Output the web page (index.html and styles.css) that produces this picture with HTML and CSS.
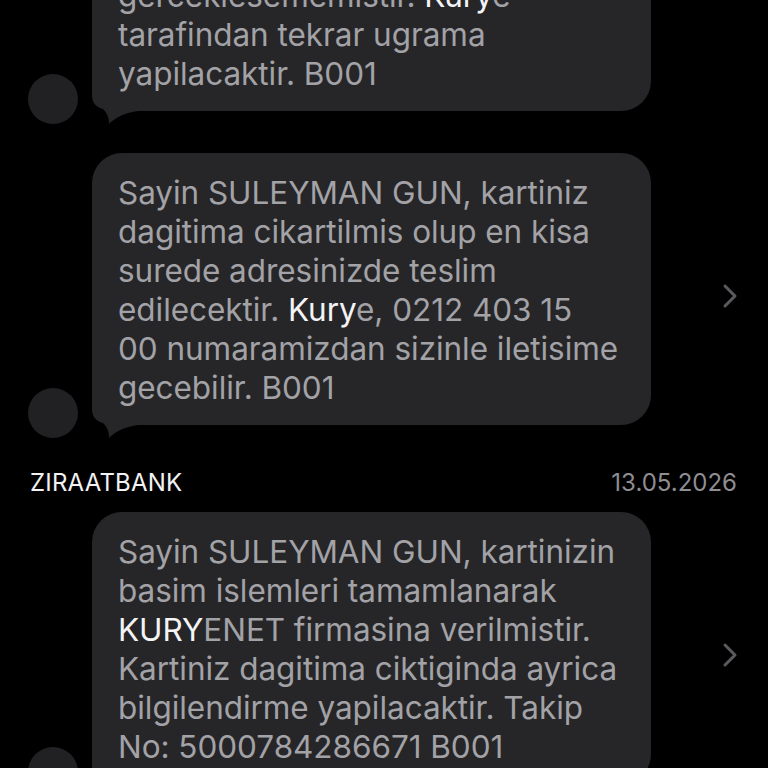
FILE: index.html
```html
<!DOCTYPE html>
<html lang="tr">
<head>
<meta charset="utf-8">
<title>Mesajlar</title>
<link rel="stylesheet" href="styles.css">
</head>
<body>
<main class="thread">
  <div class="row row-first">
    <div class="avatar"></div>
    <div class="bubble">
      <p class="text">gerceklesememistir. <span class="hl">Kury</span>e
tarafindan tekrar ugrama
yapilacaktir. B001</p>
      <svg class="tail" width="48" height="56" viewBox="0 -42 48 56"><path d="M0,-42 L0,-16 C0,-8 4,-4 11,-2 C15,2 17,6 17,13 C22,8 30,2 46,0 L46,-42 Z"/></svg>
    </div>
  </div>

  <div class="row">
    <div class="avatar"></div>
    <div class="bubble">
      <p class="text">Sayin SULEYMAN GUN, kartiniz
dagitima cikartilmis olup en kisa
surede adresinizde teslim
edilecektir. <span class="hl">Kury</span>e, 0212 403 15
00 numaramizdan sizinle iletisime
gecebilir. B001</p>
      <svg class="tail" width="48" height="56" viewBox="0 -42 48 56"><path d="M0,-42 L0,-16 C0,-8 4,-4 11,-2 C15,2 17,6 17,13 C22,8 30,2 46,0 L46,-42 Z"/></svg>
    </div>
    <svg class="chev" width="16" height="26" viewBox="0 0 16 26"><polyline points="3,3 13,13 3,23"/></svg>
  </div>

  <div class="header">
    <span class="sender">ZIRAATBANK</span>
    <span class="date">13.05.2026</span>
  </div>

  <div class="row">
    <div class="avatar"></div>
    <div class="bubble">
      <p class="text">Sayin SULEYMAN GUN, kartinizin
basim islemleri tamamlanarak
<span class="hl">KURY</span>ENET firmasina verilmistir.
Kartiniz dagitima ciktiginda ayrica
bilgilendirme yapilacaktir. Takip
No: 5000784286671 B001</p>
      <svg class="tail" width="48" height="56" viewBox="0 -42 48 56"><path d="M0,-42 L0,-16 C0,-8 4,-4 11,-2 C15,2 17,6 17,13 C22,8 30,2 46,0 L46,-42 Z"/></svg>
    </div>
    <svg class="chev" width="16" height="26" viewBox="0 0 16 26"><polyline points="3,3 13,13 3,23"/></svg>
  </div>
</main>
</body>
</html>
```

FILE: styles.css
```css
html, body {
  margin: 0;
  padding: 0;
  background: #000;
}
body {
  width: 768px;
  height: 768px;
  overflow: hidden;
  font-family: Inter, "Noto Sans", sans-serif;
}
.thread {
  display: flex;
  flex-direction: column;
}
.row {
  display: flex;
  align-items: flex-end;
  padding-left: 28px;
  margin-top: 42px;
}
.row-first {
  margin-top: -44px;
}
.avatar {
  flex: none;
  width: 50px;
  height: 50px;
  border-radius: 50%;
  background: #212123;
  margin-right: 14px;
  margin-bottom: -13px;
}
.bubble {
  position: relative;
  flex: none;
  box-sizing: border-box;
  width: 559px;
  padding: 20px 20px 18px 26px;
  background: #262628;
  border-radius: 30px;
}
.text {
  position: relative;
  z-index: 1;
  margin: 0;
  white-space: pre;
  font-size: 31.5px;
  line-height: 39px;
  letter-spacing: -0.05px;
  color: #a2a2a7;
}
.hl {
  color: #f4f4f6;
}
.tail {
  position: absolute;
  left: 0;
  bottom: -14px;
  fill: #262628;
}
.chev {
  flex: none;
  align-self: center;
  margin-left: 71px;
  margin-top: 14px;
  fill: none;
  stroke: #5a5a5e;
  stroke-width: 3;
  stroke-linecap: round;
  stroke-linejoin: round;
}
.header {
  display: flex;
  justify-content: space-between;
  align-items: baseline;
  padding: 0 31px 0 30px;
  margin-top: 44px;
  margin-bottom: -27px;
  line-height: 28px;
}
.sender {
  font-size: 24px;
  color: #f2f2f4;
  letter-spacing: 0.2px;
}
.date {
  font-size: 24px;
  color: #8e8e93;
}
```
